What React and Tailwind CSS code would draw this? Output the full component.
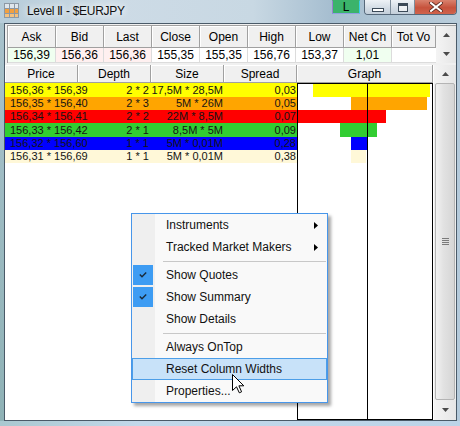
import React from "react";

const summary = [
  { h: "Ask", v: "156,39", bg: "bg-[#f0fff0]" },
  { h: "Bid", v: "156,36", bg: "bg-[#fff0f0]" },
  { h: "Last", v: "156,36", bg: "bg-[#fff0f0]" },
  { h: "Close", v: "155,35", bg: "bg-white" },
  { h: "Open", v: "155,35", bg: "bg-white" },
  { h: "High", v: "156,76", bg: "bg-white" },
  { h: "Low", v: "153,37", bg: "bg-white" },
  { h: "Net Ch", v: "1,01", bg: "bg-[#f0fff0]" },
];

const rows = [
  { price: "156,36 * 156,39", depth: "2 * 2", size: "17,5M * 28,5M", spread: "0,03", bg: "bg-[#ffff00]", bar: "bg-[#ffff00]", h: "h-[14px]", pos: "ml-[15px] w-[117px]" },
  { price: "156,35 * 156,40", depth: "2 * 3", size: "5M * 26M", spread: "0,05", bg: "bg-[#ffa500]", bar: "bg-[#ffa500]", h: "h-[13px]", pos: "ml-[53px] w-[76px]" },
  { price: "156,34 * 156,41", depth: "2 * 2", size: "22M * 8,5M", spread: "0,07", bg: "bg-[#ff0000]", bar: "bg-[#ff0000]", h: "h-[13px]", pos: "ml-0 w-[88px]" },
  { price: "156,33 * 156,42", depth: "2 * 1", size: "8,5M * 5M", spread: "0,09", bg: "bg-[#32cd32]", bar: "bg-[#32cd32]", h: "h-[14px]", pos: "ml-[42px] w-[37px]" },
  { price: "156,32 * 156,60", depth: "1 * 1", size: "5M * 0,01M", spread: "0,28", bg: "bg-[#0000ff]", bar: "bg-[#0000ff]", h: "h-[13px]", pos: "ml-[53px] w-[16px]" },
  { price: "156,31 * 156,69", depth: "1 * 1", size: "5M * 0,01M", spread: "0,38", bg: "bg-[#fff8d8]", bar: "bg-[#fff8d8]", h: "h-[13px]", pos: "ml-[53px] w-[15px]" },
];

const menu = [
  { t: "Instruments", sub: true },
  { t: "Tracked Market Makers", sub: true },
  { sep: true },
  { t: "Show Quotes", check: true },
  { t: "Show Summary", check: true },
  { t: "Show Details" },
  { sep: true },
  { t: "Always OnTop" },
  { t: "Reset Column Widths", hot: true },
  { t: "Properties..." },
];

function UpArrow() {
  return (
    <svg width="7" height="4" viewBox="0 0 7 4">
      <path d="M3.5 0 L7 4 L0 4 Z" fill="#4a4a4a" />
    </svg>
  );
}
function DownArrow() {
  return (
    <svg width="7" height="4" viewBox="0 0 7 4">
      <path d="M0 0 L7 0 L3.5 4 Z" fill="#4a4a4a" />
    </svg>
  );
}

function TitleIcon() {
  return (
    <svg width="15" height="15" viewBox="0 0 15 15">
      <rect x="0" y="0" width="15" height="15" fill="#dfe6ec" />
      <rect x="0" y="5" width="15" height="5" fill="#f2a040" />
      <rect x="0" y="10" width="15" height="5" fill="#f6c27e" />
      <path d="M0.5 0 V15 M5.5 0 V15 M10.5 0 V15 M14.5 0 V15 M0 0.5 H15 M0 5.5 H15 M0 10.5 H15 M0 14.5 H15" stroke="#8c98a4" strokeWidth="1" />
    </svg>
  );
}

export default function App() {
  return (
    <div className="w-[460px] h-[426px] overflow-hidden relative flex flex-col font-['Liberation_Sans',Arial,sans-serif] text-black bg-[linear-gradient(90deg,#b6ccd9_0%,#cddbe6_25%,#c8d8e3_55%,#a6bed0_72%,#b9cddb_100%)]">
      {/* Title bar */}
      <div className="h-[23px] flex items-start shrink-0">
        <div className="ml-[4px] mt-[3px]">
          <TitleIcon />
        </div>
        <span className="ml-[8px] mt-[4px] text-[12px] tracking-[-0.3px] leading-[15px] text-[#101010] [text-shadow:0_0_6px_#ffffff,0_0_10px_#ffffff]">
          Level Ⅱ - $EURJPY
        </span>
        <div className="ml-auto flex items-start">
          <div className="w-[28px] h-[14px] bg-[#3bb36b] border border-l-[#9a7fd0] border-b-[#8fa0e0] border-r-[#3ad0e6] border-t-[#3bb36b] flex items-center justify-center text-[12px] leading-[12px] text-black">
            L
          </div>
          <div className="ml-[4px] mr-[3px] flex h-[15px] rounded-b-[4px] border border-t-0 border-[#56687a] overflow-hidden">
            <div className="w-[26px] h-full bg-[linear-gradient(to_bottom,#eef2f6,#d2dbe4_60%,#c4cfda)] border-r border-[#7d8c9a] flex items-center justify-center">
              <div className="mt-[5px] w-[12px] h-[4px] bg-white border border-[#3c4a58]" />
            </div>
            <div className="w-[24px] h-full bg-[linear-gradient(to_bottom,#eef2f6,#d2dbe4_60%,#c4cfda)] border-r border-[#7d8c9a] flex items-center justify-center">
              <div className="w-[10px] h-[9px] border border-t-[3px] border-[#3c4a58] bg-white/60" />
            </div>
            <div className="w-[41px] h-full bg-[linear-gradient(to_bottom,#d9826e,#c6523c_55%,#d0634c)] flex items-center justify-center">
              <svg width="14" height="10" viewBox="0 0 14 10">
                <path d="M2 1 L12 9 M12 1 L2 9" stroke="#5a2a20" strokeWidth="3.6" strokeLinecap="square" />
                <path d="M2 1 L12 9 M12 1 L2 9" stroke="#ffffff" strokeWidth="2" strokeLinecap="square" />
              </svg>
            </div>
          </div>
        </div>
      </div>

      {/* Body */}
      <div className="flex h-[398px] shrink-0">
        <div className="w-[4px] bg-[linear-gradient(to_bottom,#a8c2cc,#8fb2b6)]" />
        <div className="w-[453px] border border-[#4a5a68] bg-white flex flex-col">
          {/* Summary panel */}
          <div className="h-[41px] bg-[#f0f0f0] pt-[1px] pl-[2px] shrink-0">
            <div className="flex border-l border-t border-[#a0a0a0] h-[38px]">
              {summary.map((c) => (
                <div key={c.h} className="w-[48px] flex flex-col">
                  <div className="h-[22px] bg-[#f0f0f0] border-r border-b border-[#a0a0a0] shadow-[inset_1px_1px_0_#ffffff] flex items-center justify-center text-[12px]">
                    {c.h}
                  </div>
                  <div className={`h-[15px] ${c.bg} border-r border-b border-[#dcdcdc] flex items-center justify-center text-[12px] leading-[14px]`}>
                    {c.v}
                  </div>
                </div>
              ))}
              <div className="w-[44px] flex flex-col">
                <div className="h-[22px] bg-[#f0f0f0] border-r border-b border-[#a0a0a0] shadow-[inset_1px_1px_0_#ffffff] flex items-center justify-center text-[12px] whitespace-nowrap overflow-hidden">
                  Tot Vo
                </div>
                <div className="h-[15px] bg-white border-b border-[#dcdcdc]" />
              </div>
              <div className="w-[20px] h-[37px] bg-[linear-gradient(90deg,#f4f4f4,#e6e6e6)] flex flex-col items-center justify-between py-[7px]">
                <UpArrow />
                <DownArrow />
              </div>
            </div>
          </div>

          {/* Table */}
          <div className="flex h-[355px] shrink-0">
            <div className="w-[428px] flex flex-col">
              <div className="h-[18px] flex text-[12px] shrink-0">
                {["Price", "Depth", "Size", "Spread"].map((h) => (
                  <div key={h} className="w-[73px] bg-[#f0f0f0] border-r border-b border-[#a0a0a0] shadow-[inset_1px_1px_0_#ffffff] flex items-center justify-center">
                    {h}
                  </div>
                ))}
                <div className="w-[136px] bg-[#f0f0f0] border-r border-b border-[#a0a0a0] shadow-[inset_1px_1px_0_#ffffff] flex items-center justify-center">
                  Graph
                </div>
              </div>
              <div className="flex h-[337px]">
                <div className="w-[292px] flex flex-col text-[11px] text-[#141414]">
                  {rows.map((r) => (
                    <div key={r.price} className={`${r.h} ${r.bg} flex items-center leading-[13px] whitespace-nowrap`}>
                      <div className="w-[73px] pl-[5px]">{r.price}</div>
                      <div className="w-[73px] pr-[2px] text-right">{r.depth}</div>
                      <div className="w-[73px] pr-[1px] text-right">{r.size}</div>
                      <div className="w-[73px] pr-[1px] text-right">{r.spread}</div>
                    </div>
                  ))}
                </div>
                <div className="w-[136px] h-[337px] border border-black relative flex flex-col">
                  {rows.map((r, i) => (
                    <div key={r.price} className={`${i === 0 ? "h-[13px]" : r.h} flex`}>
                      <div className={`${r.pos} ${r.bar} h-full`} />
                    </div>
                  ))}
                  <div className="absolute left-[69px] top-0 bottom-0 w-px bg-black" />
                </div>
              </div>
            </div>
            <div className="w-[1px] bg-white" />
            <div className="w-[22px] flex flex-col bg-[#eeeeee]">
              <div className="h-[18px] flex items-center justify-center bg-[linear-gradient(90deg,#f4f4f4,#e6e6e6)]">
                <UpArrow />
              </div>
              <div className="h-[317px] mx-[1px] rounded-[2px] border border-[#b4b4b4] bg-[linear-gradient(90deg,#f2f2f2,#e2e2e2_40%,#d6d6d6)] flex items-center justify-center">
                <div className="flex flex-col gap-[1px]">
                  <div className="w-[7px] h-px bg-[#7a7a7a]" />
                  <div className="w-[7px] h-px bg-[#7a7a7a]" />
                  <div className="w-[7px] h-px bg-[#7a7a7a]" />
                  <div className="w-[7px] h-px bg-[#7a7a7a]" />
                </div>
              </div>
              <div className="h-[20px] flex items-center justify-center bg-[linear-gradient(90deg,#f4f4f4,#e6e6e6)]">
                <DownArrow />
              </div>
            </div>
          </div>
        </div>
        <div className="w-[3px] bg-[#b4cadb]" />
      </div>
      <div className="flex-1 bg-[linear-gradient(90deg,#a9c8d0,#c2d8ea_30%,#bcd4e8)]" />

      {/* Context menu */}
      <div className="absolute left-[131px] top-[213px] w-[197px] h-[190px] border border-[#4796ea] bg-[linear-gradient(90deg,#efefef_23px,#f9f9f9_23px)] shadow-[3px_3px_3px_rgba(0,0,0,0.35)] flex flex-col text-[12px] text-[#111]">
        {menu.map((m, i) =>
          m.sep ? (
            <div key={i} className="h-[6px] flex items-center pl-[31px] pr-[1px]">
              <div className="h-px w-full bg-[#c8c8c8]" />
            </div>
          ) : (
            <div
              key={i}
              className={`h-[22px] flex items-center relative ${m.hot ? "bg-[#c8e2f9] border border-[#4c9ee8]" : ""}`}
            >
              {m.check && (
                <div className="absolute left-[1px] top-[1px] w-[20px] h-[20px] bg-[#3d9cf3] flex items-center justify-center">
                  <svg width="8" height="6" viewBox="0 0 8 6">
                    <path d="M0.8 2.6 L3 4.8 L7.2 0.6" stroke="#1a2a3a" strokeWidth="1.4" fill="none" />
                  </svg>
                </div>
              )}
              <span className={`${m.hot ? "ml-[33px]" : "ml-[34px]"} leading-[14px]`}>{m.t}</span>
              {m.sub && (
                <svg className="ml-auto mr-[9px]" width="4" height="7" viewBox="0 0 4 7">
                  <path d="M0 0 L4 3.5 L0 7 Z" fill="#000" />
                </svg>
              )}
            </div>
          )
        )}
      </div>

      {/* Cursor */}
      <svg className="absolute left-[232px] top-[374px]" width="13" height="20" viewBox="0 0 13 20">
        <path d="M0.5 0.5 L0.5 16.5 L4.5 12.8 L7.3 18.8 L9.6 17.8 L6.9 11.8 L11.8 11.8 Z" fill="#ffffff" stroke="#000000" strokeWidth="1" strokeLinejoin="round" />
      </svg>
    </div>
  );
}
